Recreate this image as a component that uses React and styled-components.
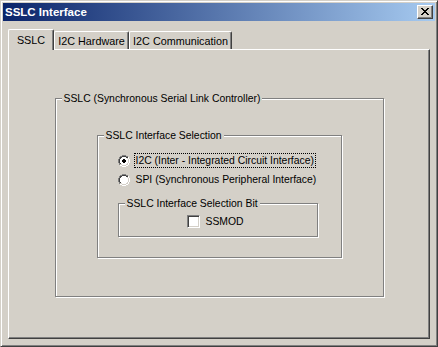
import React from "react";
import styled, { createGlobalStyle } from "styled-components";

const GlobalStyle = createGlobalStyle`
  html, body { margin: 0; padding: 0; background: #d4d0c8; }
  body { font-family: "Liberation Sans", Arial, sans-serif; font-size: 10.4px; color: #000; }
`;

const Window = styled.div`
  box-sizing: border-box;
  width: 438px;
  height: 347px;
  display: flex;
  flex-direction: column;
  background: #d4d0c8;
  border: 1px solid;
  border-color: #d4d0c8 #404040 #404040 #d4d0c8;
  box-shadow: inset 1px 1px 0 #fff, inset -1px -1px 0 #808080;
  padding: 2px;
`;

const TitleBar = styled.div`
  height: 18px;
  flex: none;
  display: flex;
  align-items: center;
  justify-content: space-between;
  padding: 0 2px;
  background: linear-gradient(to right, #0a246a, #a6caf0);
`;

const Title = styled.span`
  color: #fff;
  font-weight: bold;
  font-size: 11.5px;
  line-height: 14px;
`;

const CloseButton = styled.div`
  box-sizing: border-box;
  width: 16px;
  height: 14px;
  display: flex;
  align-items: center;
  justify-content: center;
  background: #d4d0c8;
  border: 1px solid;
  border-color: #fff #404040 #404040 #fff;
  box-shadow: inset -1px -1px 0 #808080;
  padding: 0 1px 1px 0;
`;

const Body = styled.div`
  flex: 1;
  display: flex;
  flex-direction: column;
  padding: 8px 5px 5px;
`;

const TabStrip = styled.div`
  display: flex;
  align-items: flex-end;
  height: 21px;
  margin-bottom: -1px;
  position: relative;
  z-index: 1;
`;

const Tab = styled.div`
  box-sizing: border-box;
  width: ${(p) => p.$w}px;
  height: ${(p) => (p.$active ? 21 : 18)}px;
  margin-bottom: ${(p) => (p.$active ? 0 : 1)}px;
  display: flex;
  align-items: center;
  justify-content: center;
  background: #d4d0c8;
  border: 1px solid;
  border-bottom: none;
  border-color: #fff #404040 #404040 #fff;
  border-radius: 2px 2px 0 0;
  box-shadow: inset -1px 0 0 #808080;
  padding-top: ${(p) => (p.$active ? 0 : 1)}px;
  white-space: nowrap;
  font-size: 10.8px;
`;

const Panel = styled.div`
  flex: 1;
  box-sizing: border-box;
  border: 1px solid;
  border-color: #fff #404040 #404040 #fff;
  box-shadow: inset -1px -1px 0 #808080;
  padding-top: 42px;
`;

const GroupBox = styled.fieldset`
  box-sizing: border-box;
  min-width: 0;
  width: ${(p) => p.$w}px;
  margin: ${(p) => p.$mt}px ${(p) => (p.$center ? "auto" : "0")} 0;
  padding: 0;
  border: 1px solid #808080;
  box-shadow: inset 1px 1px 0 #fff, 1px 1px 0 #fff;
`;

const GroupContent = styled.div`
  padding: ${(p) => p.$pad};
`;

const Legend = styled.legend`
  margin-left: 6px;
  padding: 0 2px;
  line-height: 13px;
  background: #d4d0c8;
  white-space: nowrap;
`;

const OptionRow = styled.div`
  display: flex;
  align-items: center;
  height: 19px;
  gap: 5px;
`;

const OptionLabel = styled.span`
  padding: 0 1px;
  line-height: 13px;
  outline: ${(p) => (p.$focus ? "1px dotted #000" : "none")};
  white-space: nowrap;
`;

const CheckRow = styled.div`
  display: flex;
  align-items: center;
  gap: 6px;
  height: 13px;
`;

const CheckBox = styled.div`
  box-sizing: border-box;
  width: 13px;
  height: 13px;
  background: #fff;
  border: 1px solid;
  border-color: #808080 #fff #fff #808080;
  box-shadow: inset 1px 1px 0 #404040, inset -1px -1px 0 #d4d0c8;
`;

const CloseGlyph = () => (
  <svg width="8" height="7" viewBox="0 0 8 7" shapeRendering="crispEdges">
    <path
      fill="#000"
      d="M0 0h2v1H0zM6 0h2v1H6zM1 1h2v1H1zM5 1h2v1H5zM2 2h4v1H2zM3 3h2v1H3zM2 4h4v1H2zM1 5h2v1H1zM5 5h2v1H5zM0 6h2v1H0zM6 6h2v1H6z"
    />
  </svg>
);

const Radio = ({ checked }) => (
  <svg width="12" height="12" viewBox="0 0 12 12" shapeRendering="crispEdges" style={{ flex: "none" }}>
    <path fill="#808080" d="M4 0h4v1H4zM2 1h2v1H2zM8 1h2v1H8zM1 2h1v2H1zM0 4h1v4H0zM1 8h1v2H1z" />
    <path fill="#404040" d="M4 1h4v1H4zM2 2h2v1H2zM8 2h2v1H8zM2 3h1v1H2zM1 4h1v4H1zM2 8h1v1H2z" />
    <path fill="#fff" d="M11 4h1v4h-1zM10 8h1v2h-1zM8 10h2v1H8zM4 11h4v1H4zM2 10h2v1H2zM10 2h1v2h-1z" />
    <path fill="#d4d0c8" d="M10 4h1v4h-1zM9 8h1v1H9zM8 9h2v1H8zM4 10h4v1H4zM2 9h2v1H2zM9 3h1v1H9z" />
    <path fill="#fff" d="M4 2h4v1H4zM3 3h6v1H3zM2 4h8v4H2zM3 8h6v1H3zM4 9h4v1H4z" />
    {checked && <path fill="#000" d="M5 4h2v1H5zM4 5h4v2H4zM5 7h2v1H5z" />}
  </svg>
);

export default function App() {
  return (
    <>
      <GlobalStyle />
      <Window>
        <TitleBar>
          <Title>SSLC Interface</Title>
          <CloseButton>
            <CloseGlyph />
          </CloseButton>
        </TitleBar>
        <Body>
          <TabStrip>
            <Tab $active $w={46}>SSLC</Tab>
            <Tab $w={75}>I2C Hardware</Tab>
            <Tab $w={103}>I2C Communication</Tab>
          </TabStrip>
          <Panel>
            <GroupBox $w={329} $mt={0} $center>
              <Legend>SSLC (Synchronous Serial Link Controller)</Legend>
              <GroupContent $pad="24px 0 38px">
                <GroupBox $w={245} $mt={0} $center>
                  <Legend>SSLC Interface Selection</Legend>
                  <GroupContent $pad="9px 0 20px 20px">
                    <OptionRow>
                      <Radio checked />
                      <OptionLabel $focus>I2C (Inter - Integrated Circuit Interface)</OptionLabel>
                    </OptionRow>
                    <OptionRow>
                      <Radio />
                      <OptionLabel>SPI (Synchronous Peripheral Interface)</OptionLabel>
                    </OptionRow>
                    <GroupBox $w={200} $mt={8}>
                      <Legend>SSLC Interface Selection Bit</Legend>
                      <GroupContent $pad="5px 0 8px 68px">
                        <CheckRow>
                          <CheckBox />
                          <span>SSMOD</span>
                        </CheckRow>
                      </GroupContent>
                    </GroupBox>
                  </GroupContent>
                </GroupBox>
              </GroupContent>
            </GroupBox>
          </Panel>
        </Body>
      </Window>
    </>
  );
}
